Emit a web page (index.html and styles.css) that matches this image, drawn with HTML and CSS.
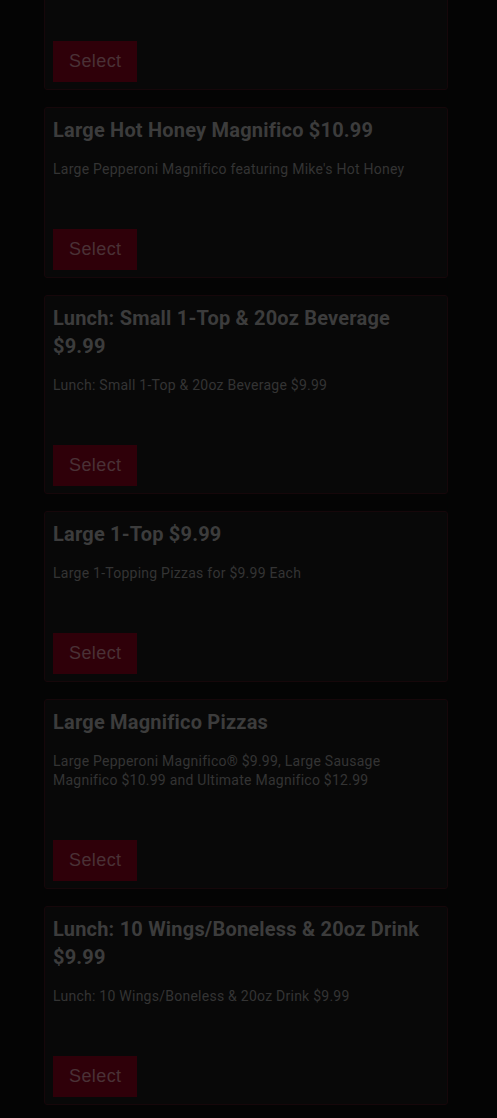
FILE: index.html
```html
<!DOCTYPE html>
<html>
<head>
<meta charset="utf-8">
<link rel="stylesheet" href="styles.css">
</head>
<body>
<div class="overlay">
  <div class="list">
    <div class="card">
      <h2 class="title">Large Pepperoni Magnifico $9.99</h2>
      <p class="desc">Large Pepperoni Magnifico</p>
      <button class="select">Select</button>
    </div>
    <div class="card">
      <h2 class="title">Large Hot Honey Magnifico $10.99</h2>
      <p class="desc">Large Pepperoni Magnifico featuring Mike's Hot Honey</p>
      <button class="select">Select</button>
    </div>
    <div class="card">
      <h2 class="title">Lunch: Small 1-Top &amp; 20oz Beverage $9.99</h2>
      <p class="desc">Lunch: Small 1-Top &amp; 20oz Beverage $9.99</p>
      <button class="select">Select</button>
    </div>
    <div class="card">
      <h2 class="title">Large 1-Top $9.99</h2>
      <p class="desc">Large 1-Topping Pizzas for $9.99 Each</p>
      <button class="select">Select</button>
    </div>
    <div class="card">
      <h2 class="title">Large Magnifico Pizzas</h2>
      <p class="desc">Large Pepperoni Magnifico® $9.99, Large Sausage Magnifico $10.99 and Ultimate Magnifico $12.99</p>
      <button class="select">Select</button>
    </div>
    <div class="card">
      <h2 class="title">Lunch: 10 Wings/Boneless &amp; 20oz Drink $9.99</h2>
      <p class="desc">Lunch: 10 Wings/Boneless &amp; 20oz Drink $9.99</p>
      <button class="select">Select</button>
    </div>
  </div>
</div>
</body>
</html>
```
FILE: styles.css
```css
html, body {
  margin: 0;
  padding: 0;
  background: #040404;
  height: 100%;
  overflow: hidden;
}
.overlay {
  padding-left: 44px;
}
.list {
  width: 404px;
  margin-top: -81px;
  display: flex;
  flex-direction: column;
  gap: 17px;
}
.card {
  background: #080808;
  border: 1px solid #16070a;
  border-radius: 3px;
  padding: 8px 8px 7px 8px;
  display: flex;
  flex-direction: column;
  align-items: flex-start;
}
.title {
  margin: 0;
  font-family: Roboto, "Noto Sans", sans-serif;
  font-weight: 700;
  font-size: 20px;
  line-height: 28px;
  letter-spacing: 0.2px;
  color: #3c3c3c;
  padding-right: 18px;
}
.desc {
  margin: 16px 0 0 0;
  font-family: Roboto, "Noto Sans", sans-serif;
  font-size: 14px;
  line-height: 19px;
  letter-spacing: 0.25px;
  color: #343434;
  padding-right: 18px;
}
.select {
  margin-top: 50px;
  height: 41px;
  padding: 0 16px;
  background: #2f0009;
  border: 0;
  border-radius: 0;
  font-family: "Liberation Sans", Arial, sans-serif;
  font-size: 18px;
  letter-spacing: 0.4px;
  color: #4a3136;
}
```
